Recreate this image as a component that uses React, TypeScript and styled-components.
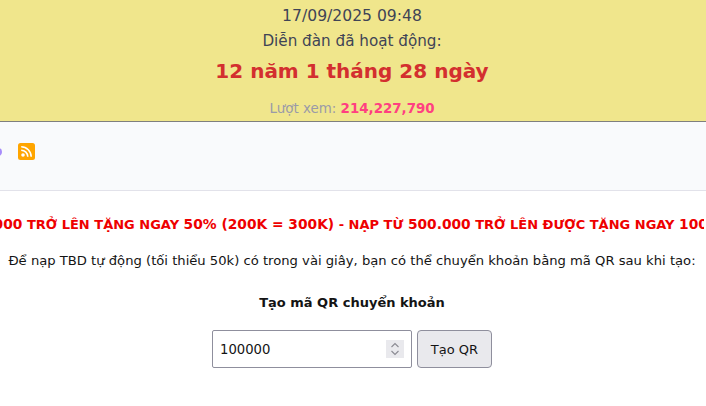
import * as React from "react";
import styled, { createGlobalStyle } from "styled-components";

const GlobalStyle = createGlobalStyle`
  html, body {
    margin: 0;
    padding: 0;
    background: #ffffff;
    overflow: hidden;
  }
  body {
    font-family: "DejaVu Sans", Verdana, sans-serif;
    font-size: 13px;
    color: #141414;
  }
`;

const Page = styled.div`
  width: 706px;
  height: 406px;
  overflow: hidden;
`;

const Banner = styled.header`
  height: 121px;
  box-sizing: content-box;
  padding-right: 2px;
  background: #f0e68c;
  border-bottom: 1px solid #7f7f7f;
  display: flex;
  flex-direction: column;
  align-items: center;
`;

const DateLine = styled.div`
  margin-top: 4px;
  font-size: 15.6px;
  line-height: 24px;
  color: #3f4456;
`;

const BannerLine = styled.div`
  margin-top: 1px;
  font-size: 15.2px;
  line-height: 24px;
  color: #3f4456;
`;

const Uptime = styled.div`
  font-size: 20px;
  font-weight: 700;
  line-height: 30px;
  margin-top: 3px;
  color: #d32f2f;
`;

const Views = styled.div`
  font-size: 13.4px;
  line-height: 18px;
  margin-top: 14px;
  color: #9a9aa8;
`;

const ViewCount = styled.strong`
  color: #ff4081;
`;

const NavBar = styled.nav`
  height: 69px;
  box-sizing: border-box;
  background: #f9fafc;
  border-bottom: 1px solid #e2e2ea;
  display: flex;
  align-items: center;
  gap: 16px;
  margin-left: -6px;
  padding-bottom: 10px;
`;

const Dot = styled.span`
  width: 8px;
  height: 8px;
  border-radius: 50%;
  background: #a78bfa;
  flex: none;
  margin-top: 2px;
`;

const Feed = styled.svg`
  width: 17px;
  height: 17px;
  flex: none;
`;

const Content = styled.main`
  display: flex;
  flex-direction: column;
  align-items: center;
  padding: 24px 2px 0 0;
`;

const Promo = styled.div`
  width: 100%;
  display: flex;
  justify-content: center;
  white-space: nowrap;
  overflow: hidden;
  font-size: 13px;
  font-weight: 700;
  line-height: 18px;
  color: #ee0000;
`;

const PromoText = styled.span`
  flex: none;
  transform: translateX(-41px);
`;

const Amount = styled.span`
  font-size: 13.8px;
`;

const Note = styled.p`
  margin: 18px 0 0;
  font-size: 13.15px;
  line-height: 18px;
  white-space: nowrap;
`;

const FormTitle = styled.h3`
  margin: 24px 0 0;
  font-size: 13px;
  font-weight: 700;
  line-height: 18px;
`;

const FormRow = styled.form`
  margin-top: 18px;
  display: flex;
  gap: 5px;
`;

const InputBox = styled.div`
  width: 200px;
  height: 38px;
  box-sizing: border-box;
  border: 1px solid #8f8f9d;
  border-radius: 2px;
  background: #fff;
  display: flex;
  align-items: center;
  justify-content: space-between;
  padding: 0 7px;
  font-size: 13.2px;
`;

const Spinner = styled.svg`
  width: 18px;
  height: 18px;
  background: #e9e9ed;
`;

const SubmitButton = styled.button`
  width: 75px;
  height: 38px;
  box-sizing: border-box;
  border: 1px solid #8f8f9d;
  border-radius: 4px;
  background: #e9e9ed;
  color: #141414;
  font-family: inherit;
  font-size: 13px;
  padding: 0;
`;

export default function App() {
  return (
    <Page>
      <GlobalStyle />
      <Banner>
        <DateLine>17/09/2025 09:48</DateLine>
        <BannerLine>Diễn đàn đã hoạt động:</BannerLine>
        <Uptime>12 năm 1 tháng 28 ngày</Uptime>
        <Views>
          Lượt xem: <ViewCount>214,227,790</ViewCount>
        </Views>
      </Banner>
      <NavBar>
        <Dot />
        <Feed viewBox="0 0 17 17">
          <rect width="17" height="17" rx="2.500" fill="#ffa500" />
          <circle cx="5" cy="12" r="1.800" fill="#fff" />
          <path d="M3.200 7.200a6.600 6.600 0 0 1 6.600 6.600" stroke="#fff" strokeWidth="1.600" fill="none" />
          <path d="M3.200 3.800a10 10 0 0 1 10 10" stroke="#fff" strokeWidth="1.600" fill="none" />
        </Feed>
      </NavBar>
      <Content>
        <Promo>
          <PromoText>
            NẠP TỪ <Amount>100.000</Amount> TRỞ LÊN TẶNG NGAY <Amount>50% (200K = 300K)</Amount> - NẠP TỪ <Amount>500.000</Amount> TRỞ LÊN ĐƯỢC TẶNG NGAY <Amount>100%</Amount>
          </PromoText>
        </Promo>
        <Note>Để nạp TBD tự động (tối thiểu 50k) có trong vài giây, bạn có thể chuyển khoản bằng mã QR sau khi tạo:</Note>
        <FormTitle>Tạo mã QR chuyển khoản</FormTitle>
        <FormRow>
          <InputBox>
            100000
            <Spinner viewBox="0 0 18 18">
              <path d="M5.500 7 9 3.500 12.500 7M5.500 11 9 14.500 12.500 11" stroke="#8a8a92" strokeWidth="1.100" fill="none" />
            </Spinner>
          </InputBox>
          <SubmitButton type="button">Tạo QR</SubmitButton>
        </FormRow>
      </Content>
    </Page>
  );
}
